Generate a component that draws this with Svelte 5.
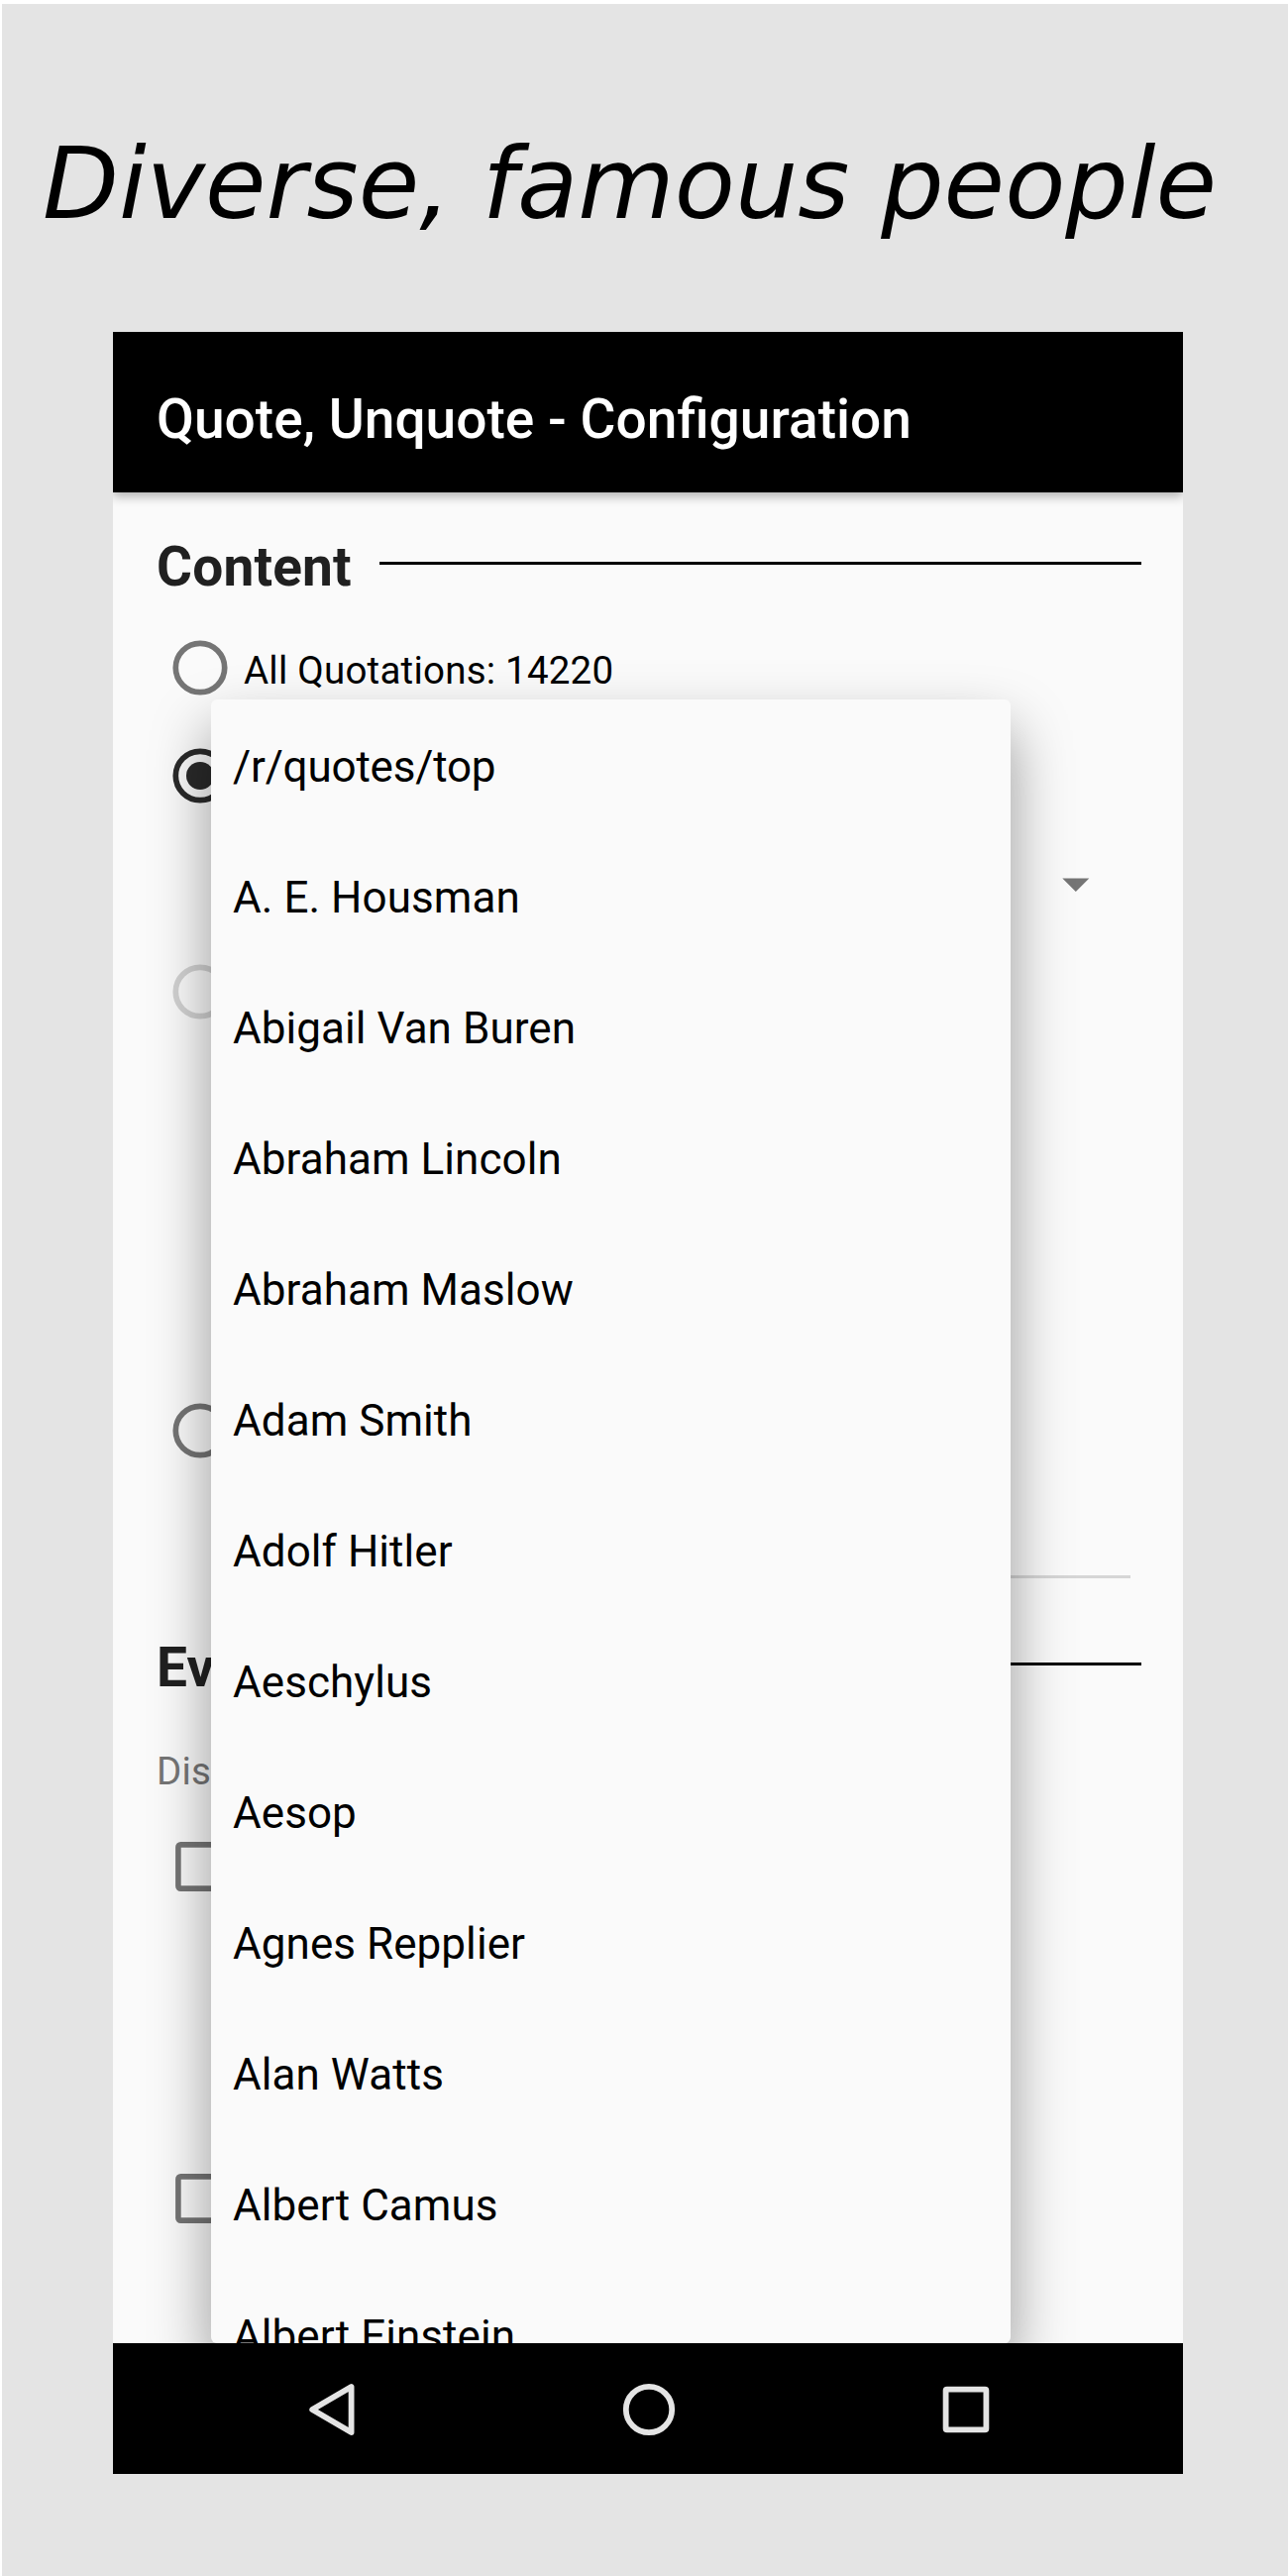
<script>
  const people = [
    '/r/quotes/top',
    'A. E. Housman',
    'Abigail Van Buren',
    'Abraham Lincoln',
    'Abraham Maslow',
    'Adam Smith',
    'Adolf Hitler',
    'Aeschylus',
    'Aesop',
    'Agnes Repplier',
    'Alan Watts',
    'Albert Camus',
    'Albert Einstein'
  ];
</script>

{#snippet radio(checked = false, disabled = false)}
  <svg class="radio" class:checked class:disabled viewBox="0 0 56 56">
    <circle cx="28" cy="28" r="24.7" fill="none" stroke="currentColor" stroke-width="5.7" />
    {#if checked}<circle cx="28" cy="28" r="14" fill="currentColor" />{/if}
  </svg>
{/snippet}

{#snippet checkbox()}
  <svg viewBox="0 0 50 50">
    <rect x="2.9" y="2.9" width="44.2" height="44.2" rx="2.4" fill="none" stroke="#757575" stroke-width="5.6" />
  </svg>
{/snippet}

<div class="page">
  <h1>Diverse, famous people</h1>

  <div class="device">
    <header>Quote, Unquote - Configuration</header>

    <main>
      <div class="heading"><h2>Content</h2><hr /></div>
      <div class="row all">{@render radio()}<span>All Quotations: 14220</span></div>
      <div class="row author">{@render radio(true)}</div>
      <div class="spinner">
        <svg viewBox="0 0 28 14"><path d="M0.3 0.5H27.3L13.8 14Z" fill="#757575" /></svg>
      </div>
      <div class="row favourites">{@render radio(false, true)}</div>
      <div class="row search">{@render radio()}</div>
      <div class="field"></div>

      <div class="heading events"><h2>Events</h2><hr /></div>
      <p>Display</p>
      <div class="box first">{@render checkbox()}</div>
      <div class="box">{@render checkbox()}</div>

      <ul class="menu">
        {#each people as person}
          <li class:path={person.startsWith('/')}>{person}</li>
        {/each}
      </ul>
    </main>

    <nav>
      <svg viewBox="0 0 56 56">
        <path d="M47.6 5V51L8.2 28Z" fill="none" stroke="#e4e4e4" stroke-width="5.8" stroke-linejoin="round" />
      </svg>
      <svg viewBox="0 0 56 56">
        <circle cx="28" cy="28" r="23.2" fill="none" stroke="#e4e4e4" stroke-width="5.8" />
      </svg>
      <svg viewBox="0 0 56 56">
        <rect x="7.6" y="7.6" width="40.8" height="40.8" rx="1.2" fill="none" stroke="#e4e4e4" stroke-width="5.8" />
      </svg>
    </nav>
  </div>
</div>

<style>
  :global(body) {
    margin: 0;
    background: #fff;
  }
  .page {
    box-sizing: border-box;
    width: 1300px;
    height: 2600px;
    border: solid #fff;
    border-width: 4px 0 0 2px;
    background: #e4e4e4;
    display: flex;
    flex-direction: column;
    overflow: hidden;
    font-family: Roboto, sans-serif;
  }
  h1 {
    margin: 0;
    height: 331px;
    box-sizing: border-box;
    padding: 122px 0 0 41px;
    font: italic 400 100px/120px 'DejaVu Sans', sans-serif;
    white-space: nowrap;
    color: #000;
  }
  .device {
    width: 1080px;
    height: 2162px;
    margin-left: 112px;
    display: flex;
    flex-direction: column;
    overflow: hidden;
    background: #fafafa;
  }
  header {
    flex: none;
    box-sizing: border-box;
    height: 162px;
    padding: 56px 44px 0;
    background: #000;
    color: #fff;
    font-size: 55.1px;
    line-height: 64px;
    font-weight: 500;
    box-shadow: 0 4px 10px rgba(0, 0, 0, 0.3);
    z-index: 1;
  }
  main {
    position: relative;
    flex: none;
    box-sizing: border-box;
    height: 1868px;
    padding: 43px 42px 0 44px;
    display: flex;
    flex-direction: column;
    overflow: hidden;
  }
  .heading {
    flex: none;
    display: flex;
    height: 64px;
    gap: 28px;
  }
  h2 {
    margin: 0;
    font-size: 55px;
    line-height: 64px;
    font-weight: 700;
    letter-spacing: 0.18px;
    color: #202020;
  }
  hr {
    flex: 1;
    height: 3px;
    margin: 27px 0 0;
    border: 0;
    background: #000;
  }
  .row {
    height: 88px;
    padding-left: 16px;
    display: flex;
    align-items: center;
    gap: 16px;
  }
  .row span {
    padding-top: 5px;
    font-size: 38.5px;
    line-height: 46px;
    letter-spacing: 0.22px;
    color: #000;
  }
  .radio {
    width: 56px;
    height: 56px;
    color: #757575;
  }
  .radio.checked {
    color: #2a2a2a;
  }
  .radio.disabled {
    color: #d2d2d2;
  }
  .all {
    margin-top: 26px;
  }
  .author {
    margin-top: 21px;
  }
  .spinner {
    height: 88px;
    margin-top: 22px;
    padding-right: 52px;
    display: flex;
    align-items: center;
    justify-content: flex-end;
  }
  .spinner svg {
    width: 28px;
    height: 14px;
  }
  .favourites {
    margin-top: 20px;
  }
  .search {
    margin-top: 355px;
  }
  .field {
    height: 3px;
    margin: 102px 11px 0 77px;
    background: #d6d6d6;
  }
  .events {
    margin-top: 58px;
  }
  p {
    margin: 51px 0 0;
    font-size: 38.5px;
    line-height: 44px;
    letter-spacing: 0.2px;
    color: #757575;
  }
  .box {
    flex: none;
    height: 50px;
    margin: 285px 0 0 19px;
  }
  .box.first {
    margin-top: 49px;
  }
  .box svg {
    display: block;
    width: 50px;
    height: 50px;
  }
  .menu {
    position: absolute;
    left: 99px;
    top: 209px;
    width: 807px;
    height: 1659px;
    box-sizing: border-box;
    margin: 0;
    padding: 2px 22px 0;
    overflow: hidden;
    list-style: none;
    border-radius: 6px;
    background: #fafafa;
    box-shadow: 0 30px 60px rgba(0, 0, 0, 0.4);
  }
  li {
    height: 132px;
    font-size: 44px;
    line-height: 132px;
    letter-spacing: 0.06px;
    color: #000;
  }
  li.path {
    letter-spacing: -0.2px;
  }
  nav {
    flex: none;
    box-sizing: border-box;
    height: 132px;
    padding: 1px 0 0 1px;
    background: #000;
    display: flex;
    align-items: center;
    justify-content: center;
    gap: 264px;
  }
  nav svg {
    width: 56px;
    height: 56px;
  }
</style>
